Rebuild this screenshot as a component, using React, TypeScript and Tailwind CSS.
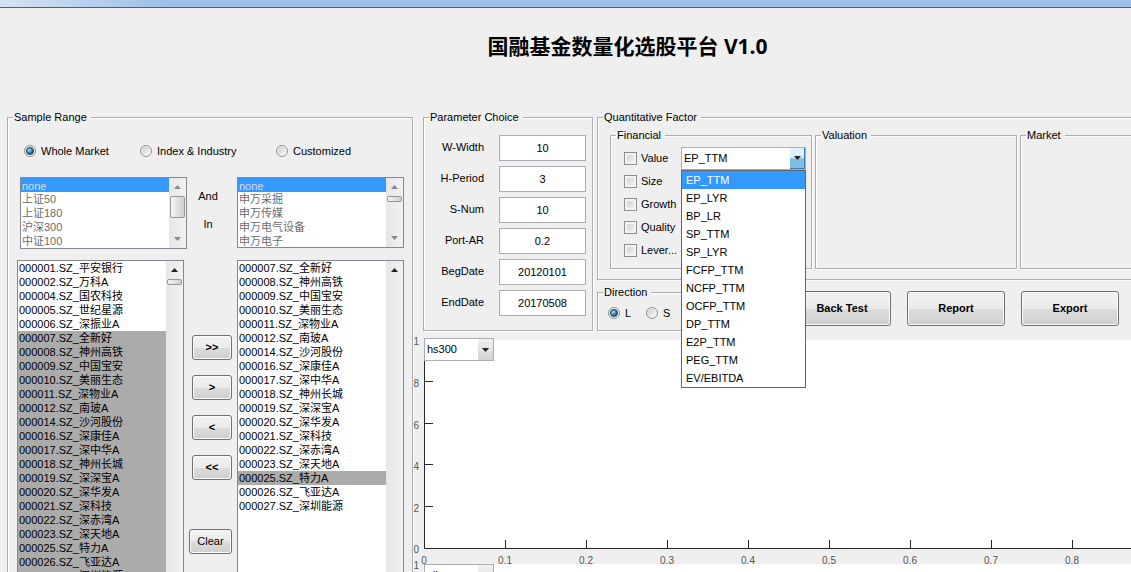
import React from "react";

const SAMPLE_STOCKS = [
  "000001.SZ_平安银行",
  "000002.SZ_万科A",
  "000004.SZ_国农科技",
  "000005.SZ_世纪星源",
  "000006.SZ_深振业A",
  "000007.SZ_全新好",
  "000008.SZ_神州高铁",
  "000009.SZ_中国宝安",
  "000010.SZ_美丽生态",
  "000011.SZ_深物业A",
  "000012.SZ_南玻A",
  "000014.SZ_沙河股份",
  "000016.SZ_深康佳A",
  "000017.SZ_深中华A",
  "000018.SZ_神州长城",
  "000019.SZ_深深宝A",
  "000020.SZ_深华发A",
  "000021.SZ_深科技",
  "000022.SZ_深赤湾A",
  "000023.SZ_深天地A",
  "000025.SZ_特力A",
  "000026.SZ_飞亚达A",
  "000027.SZ_深圳能源",
];

// everything after the first five rows has been moved to the right-hand list
const CHOSEN_STOCKS = SAMPLE_STOCKS.slice(5);

const INDEXES = ["none", "上证50", "上证180", "沪深300", "中证100"];
const INDUSTRIES = ["none", "申万采掘", "申万传媒", "申万电气设备", "申万电子"];

const PARAMS = [
  { id: "w-width", label: "W-Width", value: "10" },
  { id: "h-period", label: "H-Period", value: "3" },
  { id: "s-num", label: "S-Num", value: "10" },
  { id: "port-ar", label: "Port-AR", value: "0.2" },
  { id: "beg-date", label: "BegDate", value: "20120101" },
  { id: "end-date", label: "EndDate", value: "20170508" },
];

const FACTORS = ["Value", "Size", "Growth", "Quality", "Lever..."];

const VALUE_FACTORS = [
  "EP_TTM",
  "EP_LYR",
  "BP_LR",
  "SP_TTM",
  "SP_LYR",
  "FCFP_TTM",
  "NCFP_TTM",
  "OCFP_TTM",
  "DP_TTM",
  "E2P_TTM",
  "PEG_TTM",
  "EV/EBITDA",
];

type GroupProps = { title: string; className?: string; children?: React.ReactNode };

const Group = ({ title, className = "", children }: GroupProps) => (
  <fieldset
    className={`min-w-0 border border-[#adadad] shadow-[1px_1px_0_#fff,inset_1px_1px_0_#fff] ${className}`}
  >
    <legend className="ml-[5px] h-[14px] bg-[#efefef] pl-px pr-1 leading-[14px]">{title}</legend>
    {children}
  </fieldset>
);

type RadioProps = { name: string; label: string; checked?: boolean; className?: string };

const Radio = ({ name, label, checked, className = "" }: RadioProps) => (
  <label className={`flex items-center gap-[5px] leading-[14px] ${className}`}>
    <span className="relative flex h-3 w-3">
      <input
        type="radio"
        name={name}
        defaultChecked={checked}
        className="peer h-3 w-3 appearance-none rounded-full border border-[#8e8f8f] bg-linear-to-br from-[#c4c8cc] to-white shadow-[inset_0_0_0_1px_#f4f4f4]"
      />
      <span className="pointer-events-none absolute inset-[2px] hidden rounded-full border border-[#1c3a55] bg-radial-[at_35%_35%] from-[#a8e4fa] via-[#2a86b8] to-[#0c2b45] peer-checked:block" />
    </span>
    {label}
  </label>
);

const Arrow = ({ down, dim }: { down?: boolean; dim?: boolean }) => (
  <svg width="7" height="4" viewBox="0 0 7 4" className={dim ? "fill-[#8a8a8a]" : "fill-[#222]"}>
    {down ? <path d="M0 0h7L3.5 4z" /> : <path d="M0 4h7L3.5 0z" />}
  </svg>
);

type ListBoxProps = {
  label: string;
  items: string[];
  selected: string[];
  disabled?: boolean;
  thumb?: "tall" | "short";
  className?: string;
};

const ListBox = ({ label, items, selected, disabled, thumb, className = "" }: ListBoxProps) => (
  <div className={`flex border border-[#828790] bg-white ${className}`}>
    <select
      multiple
      aria-label={label}
      disabled={disabled}
      defaultValue={selected}
      className={`min-w-0 flex-1 appearance-none overflow-hidden bg-white p-0 opacity-100 outline-none [scrollbar-width:none] ${
        disabled ? "text-[#6d6d6d]" : "text-black"
      }`}
    >
      {items.map((item) => (
        <option
          key={item}
          value={item}
          className={`flex h-[14px] min-h-[14px] items-end p-0 pl-px leading-[14px] ${
            disabled
              ? "[-webkit-text-fill-color:#6d6d6d] checked:bg-linear-to-r checked:from-[#3399ff] checked:to-[#3399ff] checked:[-webkit-text-fill-color:#dcdcdc]"
              : "[-webkit-text-fill-color:#000] checked:bg-linear-to-r checked:from-[#ababab] checked:to-[#ababab]"
          }`}
        >
          {item}
        </option>
      ))}
    </select>
    <div className="flex w-[17px] flex-col items-center bg-linear-to-r from-[#e6e6e6] to-[#f2f2f2]">
      <span className="flex h-[18px] items-center">
        <Arrow dim={disabled} />
      </span>
      {thumb && (
        <span
          className={`w-[15px] rounded-xs border border-[#979797] bg-linear-to-r from-[#f5f5f5] to-[#cfcfcf] ${
            thumb === "tall" ? "h-[22px]" : "h-[6px]"
          }`}
        />
      )}
      <span className="mt-auto flex h-[18px] items-center">
        <Arrow down dim={disabled} />
      </span>
    </div>
  </div>
);

const Button = ({ className = "", children }: { className?: string; children: React.ReactNode }) => (
  <button
    type="button"
    className={`rounded-[3px] border border-[#707070] bg-[linear-gradient(#f2f2f2,#ebebeb_50%,#dddddd_50%,#cfcfcf)] shadow-[inset_0_0_0_1px_#fafafa] ${className}`}
  >
    {children}
  </button>
);

type ComboProps = { label: string; options: string[]; open?: boolean; className?: string };

const Combo = ({ label, options, open, className = "" }: ComboProps) => (
  <div className={`flex h-[23px] border border-[#abadb3] bg-white ${className}`}>
    <select
      aria-label={label}
      className="min-w-0 flex-1 appearance-none bg-white pl-[2px] leading-[21px] outline-none"
    >
      {options.map((o) => (
        <option key={o}>{o}</option>
      ))}
    </select>
    <span
      className={`pointer-events-none flex w-[15px] items-center justify-center ${
        open
          ? "border-r border-b border-[#3c7fb1] bg-linear-to-b from-[#dff2fb] from-45% to-[#7fc0e2] to-55%"
          : "bg-linear-to-b from-[#f2f2f2] to-[#d2d2d2]"
      }`}
    >
      <Arrow down />
    </span>
  </div>
);

const X_TICKS = [1, 2, 3, 4, 5, 6, 7, 8];
const Y_TICKS = [2, 4, 6, 8];

const Chart = ({ name, comboClass }: { name: string; comboClass: string }) => (
  <div className="relative">
    <svg className="block h-[224px] w-full overflow-visible fill-[#555] font-['Liberation_Sans',sans-serif] text-[10px]">
      <rect x="11" y="0" width="100%" height="209" fill="#fff" />
      <path d="M11.5 0V208.5H1200" fill="none" stroke="#262626" />
      {Y_TICKS.map((t) => (
        <g key={t}>
          <path d={`M11 ${Math.round(208 - t * 20.9) + 0.5}h9`} stroke="#262626" />
          <text x="6" y={Math.round(208 - t * 20.9) + 6} textAnchor="end">
            {t}
          </text>
        </g>
      ))}
      {X_TICKS.map((t) => (
        <g key={t}>
          <path d={`M${11 + t * 81 + 0.5} 208v-8`} stroke="#262626" />
          <text x={11 + t * 81} y="224" textAnchor="middle">
            {t / 10}
          </text>
        </g>
      ))}
      <text x="6" y="5" textAnchor="end">1</text>
      <text x="6" y="213" textAnchor="end">0</text>
      <text x="11" y="224" textAnchor="middle">0</text>
    </svg>
    <Combo label={`${name} series`} options={[name]} className={`absolute left-[11px] w-[70px] ${comboClass}`} />
  </div>
);

const SampleRange = () => (
  <Group title="Sample Range" className="w-[406px] shrink-0">
    <div className="flex pl-4 pt-5">
      <Radio name="range" label="Whole Market" checked className="w-[116px]" />
      <Radio name="range" label="Index & Industry" className="w-[136px]" />
      <Radio name="range" label="Customized" />
    </div>
    <div className="flex pl-3 pt-[19px]">
      <ListBox label="Index" items={INDEXES} selected={["none"]} disabled thumb="tall" className="h-[72px] w-[167px]" />
      <div className="flex flex-1 flex-col items-center gap-[14px] pr-2 pt-3 leading-[14px]">
        <span>And</span>
        <span>In</span>
      </div>
      <ListBox label="Industry" items={INDUSTRIES} selected={["none"]} disabled thumb="short" className="mr-2 h-[71px] w-[167px]" />
    </div>
    <div className="flex pl-[9px] pt-[11px]">
      <ListBox
        label="Available stocks"
        items={SAMPLE_STOCKS}
        selected={CHOSEN_STOCKS}
        thumb="short"
        className="h-[420px] w-[167px]"
      />
      <div className="flex flex-1 flex-col items-end pr-[5px] pt-[75px] font-bold">
        <div className="flex flex-col gap-[15px]">
          <Button className="h-[25px] w-[40px]">&gt;&gt;</Button>
          <Button className="h-[25px] w-[40px]">&gt;</Button>
          <Button className="h-[25px] w-[40px]">&lt;</Button>
          <Button className="h-[25px] w-[40px]">&lt;&lt;</Button>
        </div>
        <Button className="mt-[49px] h-[25px] w-[43px] font-normal">Clear</Button>
      </div>
      <ListBox
        label="Chosen stocks"
        items={CHOSEN_STOCKS}
        selected={["000025.SZ_特力A"]}
        className="mr-2 h-[420px] w-[167px]"
      />
    </div>
  </Group>
);

const ParameterChoice = () => (
  <Group title="Parameter Choice" className="w-[170px] shrink-0">
    <div className="flex flex-col gap-[5px] pl-2 pr-[6px] pt-[11px]">
      {PARAMS.map((p) => (
        <div key={p.id} className="flex items-center justify-between">
          <label htmlFor={p.id} className="w-[52px] pb-[2px] text-right leading-[14px]">
            {p.label}
          </label>
          <input
            id={p.id}
            defaultValue={p.value}
            className="h-[26px] w-[87px] border border-[#abadb3] bg-white text-center outline-none"
          />
        </div>
      ))}
    </div>
  </Group>
);

const Financial = () => (
  <Group title="Financial" className="h-[141px] w-[202px] shrink-0">
    <div className="flex pl-[13px] pt-[5px]">
      <div className="flex w-[57px] flex-col gap-[9px] pt-1">
        {FACTORS.map((f) => (
          <label key={f} className="flex h-[14px] items-center gap-1 leading-[14px] whitespace-nowrap">
            <input
              type="checkbox"
              className="h-[13px] w-[13px] shrink-0 appearance-none border border-[#8e8f8f] bg-linear-to-br from-[#cbcfd5] to-[#f6f6f6] shadow-[inset_0_0_0_2px_#f4f4f4]"
            />
            {f}
          </label>
        ))}
      </div>
      <div className="relative h-[23px] w-[125px]">
        <Combo label="Value factor" options={VALUE_FACTORS} open />
        <ul
          role="listbox"
          aria-label="Value factors"
          className="absolute left-0 top-[23px] z-10 w-full border border-[#646464] bg-white"
        >
          {VALUE_FACTORS.map((v, i) => (
            <li
              key={v}
              role="option"
              aria-selected={i === 0}
              className={`h-[18px] pl-1 leading-[18px] ${i === 0 ? "bg-[#3399ff] text-white" : ""}`}
            >
              {v}
            </li>
          ))}
        </ul>
      </div>
    </div>
  </Group>
);

const QuantitativeFactor = () => (
  <Group title="Quantitative Factor" className="h-[170px] border-r-0">
    <div className="flex gap-[3px] pl-3 pt-1">
      <Financial />
      <Group title="Valuation" className="h-[141px] w-[202px] shrink-0" />
      <Group title="Market" className="h-[141px] flex-1 border-r-0" />
    </div>
  </Group>
);

export default function App() {
  return (
    <div className="flex h-screen flex-col overflow-hidden bg-[#efefef] font-['Liberation_Sans','Noto_Sans_CJK_SC',sans-serif] text-[11px] text-black">
      <div className="h-2 shrink-0 border-b border-[#55606e] bg-linear-to-r from-[#d5e3f4] to-[#9dbfe8] to-15%" />
      <h1 className="shrink-0 pl-[124px] pt-[23px] text-center font-['Open_Sans','Noto_Sans_CJK_SC',sans-serif] text-[21px] leading-[30px] font-bold">
        国融基金数量化选股平台 V1.0
      </h1>
      <main className="flex items-start pl-[7px] pt-[49px]">
        <SampleRange />
        <div className="flex min-w-0 flex-1 flex-col">
          <div className="flex gap-1 pl-[10px]">
            <ParameterChoice />
            <div className="flex min-w-0 flex-1 flex-col">
              <QuantitativeFactor />
              <div className="flex gap-3 pt-[5px]">
                <Group title="Direction" className="h-[46px] w-[184px] shrink-0">
                  <div className="flex pl-[10px] pt-[7px]">
                    <Radio name="direction" label="L" checked className="w-[38px]" />
                    <Radio name="direction" label="S" />
                  </div>
                </Group>
                <div className="flex gap-4 pt-[6px] font-bold">
                  <Button className="h-[35px] w-[98px]">Back Test</Button>
                  <Button className="h-[35px] w-[98px]">Report</Button>
                  <Button className="h-[35px] w-[98px]">Export</Button>
                </div>
              </div>
            </div>
          </div>
          <div className="pt-[9px]">
            <Chart name="hs300" comboClass="-top-[2px]" />
            <Chart name="all" comboClass="top-0" />
          </div>
        </div>
      </main>
    </div>
  );
}
